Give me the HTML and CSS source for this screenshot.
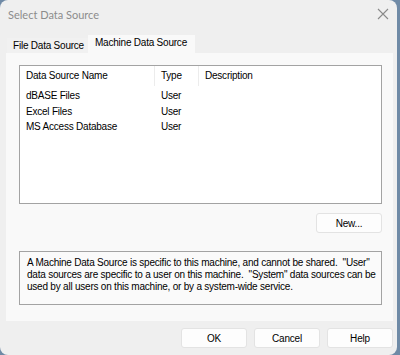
FILE: index.html
```html
<!DOCTYPE html>
<html>
<head>
  <meta charset="UTF-8">
  <title>Select Data Source</title>
  <link rel="stylesheet" href="styles.css">
</head>
<body>
  <div class="window">
    <!-- Title bar -->
    <div class="titlebar">
      <span class="title">Select Data Source</span>
      <svg class="close" width="12" height="12" viewBox="0 0 12 12">
        <path d="M1 1 L11 11 M11 1 L1 11" stroke="#8a8a8a" stroke-width="1.1" fill="none"/>
      </svg>
    </div>

    <!-- Tabs -->
    <div class="tabs">
      <div class="tab">File Data Source</div>
      <div class="tab active">Machine Data Source</div>
    </div>

    <div class="panel">
      <!-- List of data sources -->
      <div class="listview">
        <div class="list-header">
          <div class="col col-name">Data Source Name</div>
          <div class="col col-type">Type</div>
          <div class="col col-desc">Description</div>
        </div>
        <div class="list-row">
          <div class="col col-name">dBASE Files</div>
          <div class="col col-type">User</div>
          <div class="col col-desc"></div>
        </div>
        <div class="list-row">
          <div class="col col-name">Excel Files</div>
          <div class="col col-type">User</div>
          <div class="col col-desc"></div>
        </div>
        <div class="list-row">
          <div class="col col-name">MS Access Database</div>
          <div class="col col-type">User</div>
          <div class="col col-desc"></div>
        </div>
      </div>

      <div class="new-row">
        <button class="btn btn-new">New...</button>
      </div>

      <!-- Help text -->
      <div class="info">
        A Machine Data Source is specific to this machine, and cannot be shared.&nbsp; "User"<br>
        data sources are specific to a user on this machine.&nbsp; "System" data sources can be<br>
        used by all users on this machine, or by a system-wide service.
      </div>
    </div>

    <!-- Dialog buttons -->
    <div class="buttons">
      <button class="btn">OK</button>
      <button class="btn">Cancel</button>
      <button class="btn">Help</button>
    </div>
  </div>
</body>
</html>
```

FILE: styles.css
```css
/* Desktop behind the dialog */
body {
  margin: 0;
  background-color: #6f8aa6;
  font-family: "Liberation Sans", Arial, sans-serif;
  font-size: 10px;
  letter-spacing: -0.22px;
  color: #000;
  overflow: hidden;
}
/* Dialog window */
.window {
  width: 397px;
  height: 355px;
  background: #efefef;
  border-radius: 8px;
  box-sizing: border-box;
  display: flex;
  flex-direction: column;
}
/* Title bar */
.titlebar {
  height: 30px;
  display: flex;
  align-items: center;
  justify-content: space-between;
  padding: 0 7px 2px 8px;
  box-sizing: border-box;
}
.title {
  font-family: Lato, "Open Sans", sans-serif;
  font-size: 11px;
  letter-spacing: 0;
  color: #8c8c8c;
}
.close {
  margin-right: 1px;
}
/* Tabs */
.tabs {
  display: flex;
  align-items: flex-end;
  margin-top: 5px;
  padding-left: 7px;
  height: 18px;
}
.tab {
  height: 15px;
  line-height: 15px;
  padding-left: 6px;
  width: 81px;
  box-sizing: border-box;
  white-space: nowrap;
  overflow: hidden;
  background: #f1f1f1;
}
.tab.active {
  height: 18px;
  line-height: 16px;
  width: 107px;
  padding-left: 7px;
  background: #f9f9f9;
}
/* Tab panel */
.panel {
  margin-left: 6px;
  width: 387px;
  height: 268px;
  background: #f9f9f9;
  padding: 12px 11px 0 13px;
  box-sizing: border-box;
}
/* List view */
.listview {
  height: 139px;
  background: #fff;
  border: 1px solid #a3a3a3;
  box-sizing: border-box;
}
.list-header {
  display: flex;
  height: 20px;
  line-height: 20px;
  margin-bottom: 2px;
}
.list-header .col {
  border-right: 1px solid #ececec;
}
.list-header .col-desc {
  border-right: none;
}
.list-row {
  display: flex;
  height: 15.5px;
  line-height: 15.5px;
}
.col {
  padding-left: 6px;
  box-sizing: border-box;
  white-space: nowrap;
}
.col-name {
  width: 135px;
}
.col-type {
  width: 44px;
}
.col-desc {
  flex: 1;
}
/* Buttons */
.btn {
  font-family: "Liberation Sans", Arial, sans-serif;
  font-size: 10px;
  letter-spacing: -0.2px;
  color: #000;
  background: #fdfdfd;
  border: 1px solid #e3e3e3;
  border-radius: 3px;
  width: 66px;
  height: 20px;
  padding: 0;
}
.new-row {
  display: flex;
  justify-content: flex-end;
  margin-top: 9px;
}
/* Info text box */
.info {
  margin-top: 18px;
  height: 54px;
  border: 1px solid #a3a3a3;
  box-sizing: border-box;
  padding: 5px 0 0 7px;
  line-height: 12px;
  white-space: nowrap;
  background: #fafafa;
}
/* Bottom button row */
.buttons {
  display: flex;
  justify-content: flex-end;
  gap: 7px;
  margin-top: 7px;
  padding-right: 4px;
}
```
